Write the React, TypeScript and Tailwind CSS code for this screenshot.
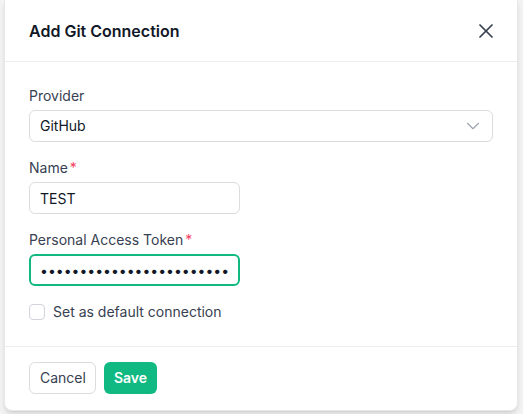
import React, { useState } from "react";
import { ChevronDown, X } from "lucide-react";

const Label = ({ text, required }: { text: string; required?: boolean }) => (
  <label className="block text-sm leading-5 text-[#374151] mb-1">
    {text}
    {required && <span className="text-[#f43f5e] ml-0.5">*</span>}
  </label>
);

const App = () => {
  const [name, setName] = useState("TEST");
  const [token, setToken] = useState("ghp_xxxxxxxxxxxxxxxxxxxxxxxxxxxx");
  const [isDefault, setIsDefault] = useState(false);

  return (
    <div className="min-h-[414px] bg-[#f3f3f3] font-['Inter',sans-serif] text-[#111827]">
      <div className="ml-[4px] w-[514px] bg-white rounded-b-lg border-x border-b border-[#e5e7eb] shadow-md">
        <div className="flex items-center justify-between pl-6 pr-[19px] h-[62px] border-b border-[#ececec]">
          <h2 className="text-base font-semibold text-[#111827]">Add Git Connection</h2>
          <button className="text-[#374151]">
            <X size={24} strokeWidth={1.75} />
          </button>
        </div>

        <div className="px-6 pt-6 pb-6 flex flex-col gap-4">
          <div>
            <Label text="Provider" />
            <div className="relative">
              <select className="appearance-none w-full h-8 rounded-md border border-[#dcdcdc] bg-white pl-[10px] text-sm text-[#111827] outline-none">
                <option>GitHub</option>
                <option>GitLab</option>
                <option>Bitbucket</option>
              </select>
              <ChevronDown
                size={22}
                strokeWidth={1.25}
                className="absolute right-[9px] top-[5px] text-[#9ca3af] pointer-events-none"
              />
            </div>
          </div>

          <div>
            <Label text="Name" required />
            <input
              value={name}
              onChange={(e) => setName(e.target.value)}
              className="w-[211px] h-8 rounded-md border border-[#dcdcdc] px-[10px] text-sm text-[#111827] outline-none"
            />
          </div>

          <div>
            <Label text="Personal Access Token" required />
            <input
              type="password"
              value={token}
              onChange={(e) => setToken(e.target.value)}
              className="w-[211px] h-8 rounded-md border-2 border-[#10b981] px-[9px] text-sm text-[#111827] outline-none"
            />
          </div>

          <label className="flex items-center gap-2 text-sm leading-5 text-[#374151]">
            <input
              type="checkbox"
              checked={isDefault}
              onChange={(e) => setIsDefault(e.target.checked)}
              className="appearance-none w-4 h-4 rounded border border-[#d1d5db] bg-white checked:bg-[#10b981]"
            />
            Set as default connection
          </label>
        </div>

        <div className="flex gap-2 px-6 pt-[15px] pb-4 border-t border-[#ececec]">
          <button className="h-8 pl-[10px] pr-[9px] rounded-md border border-[#dcdcdc] bg-white text-sm text-[#374151]">
            Cancel
          </button>
          <button className="h-8 px-[10px] rounded-md bg-[#10b981] text-sm font-semibold text-white">
            Save
          </button>
        </div>
      </div>
    </div>
  );
};

export default App;
